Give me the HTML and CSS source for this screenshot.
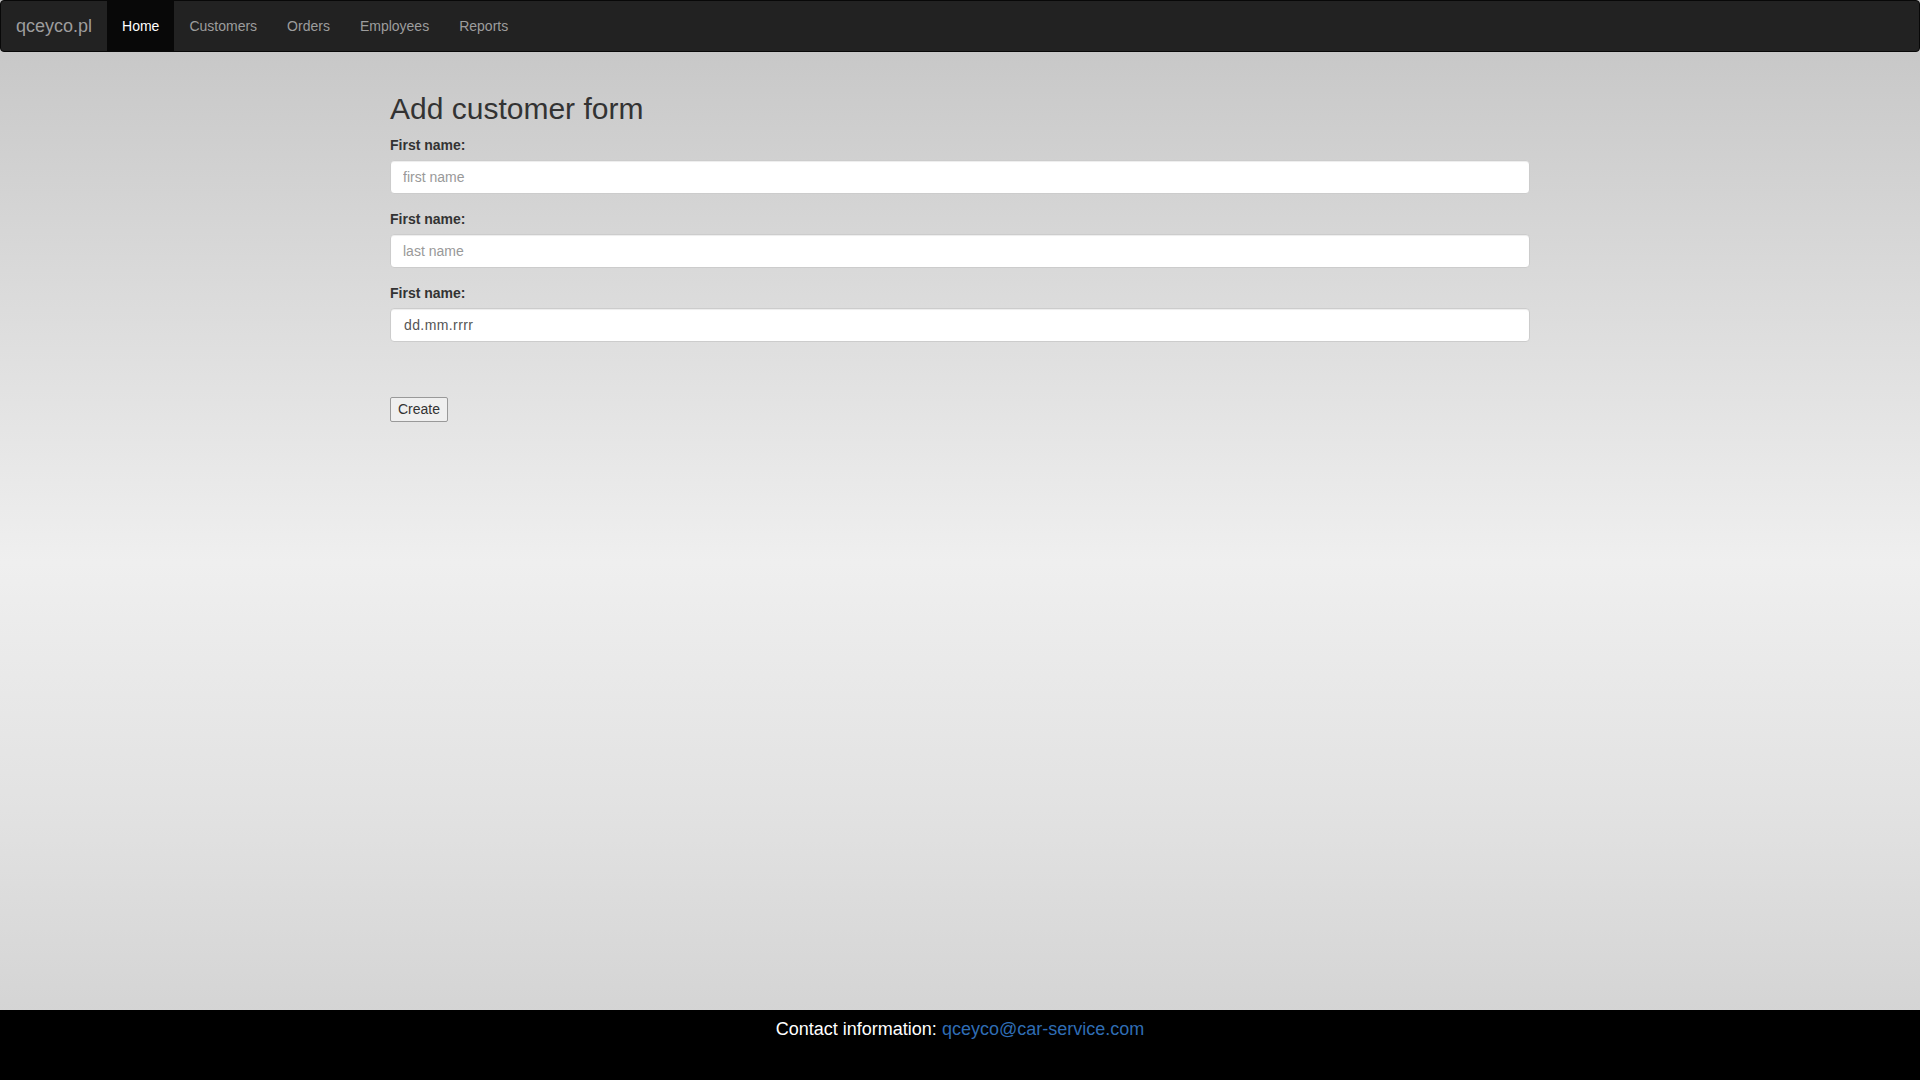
FILE: index.html
```html
<!DOCTYPE html>
<html lang="pl">
<head>
<meta charset="utf-8">
<title>qceyco.pl</title>
<link rel="stylesheet" href="styles.css">
</head>
<body>
<div class="page">
  <nav class="navbar">
    <a class="brand" href="#">qceyco.pl</a>
    <ul class="nav">
      <li class="active"><a href="#">Home</a></li>
      <li><a href="#">Customers</a></li>
      <li><a href="#">Orders</a></li>
      <li><a href="#">Employees</a></li>
      <li><a href="#">Reports</a></li>
    </ul>
  </nav>
  <main class="container">
    <h2 class="title">Add customer form</h2>
    <form class="form">
      <div class="form-group">
        <label class="label">First name:</label>
        <input class="form-control" type="text" placeholder="first name">
      </div>
      <div class="form-group">
        <label class="label">First name:</label>
        <input class="form-control" type="text" placeholder="last name">
      </div>
      <div class="form-group">
        <label class="label">First name:</label>
        <input class="form-control date" type="text" value="dd.mm.rrrr">
      </div>
      <div class="actions">
        <button class="create" type="button">Create</button>
      </div>
    </form>
  </main>
  <footer class="footer">
    Contact information: <a class="mail" href="#">qceyco@car-service.com</a>
  </footer>
</div>
</body>
</html>
```

FILE: styles.css
```css
* { box-sizing: border-box; }
html, body { margin: 0; padding: 0; height: 100%; }
body {
  font-family: "Liberation Sans", Arial, Helvetica, sans-serif;
  font-size: 14px;
  line-height: 1.42857;
  color: #333;
  background: linear-gradient(to bottom, #c4c4c4 0%, #d9d9d9 25%, #efefef 52%, #e2e2e2 75%, #d4d4d4 94%, #d4d4d4 100%);
}
.page {
  display: flex;
  flex-direction: column;
  min-height: 100vh;
}
.navbar {
  display: flex;
  align-items: stretch;
  height: 52px;
  background: #222;
  border: 1px solid #080808;
  border-radius: 4px;
  margin-bottom: 20px;
}
.brand {
  display: block;
  padding: 15px 15px 15px 15px;
  font-size: 18px;
  line-height: 20px;
  color: #9d9d9d;
  text-decoration: none;
}
.nav {
  display: flex;
  list-style: none;
  margin: 0;
  padding: 0;
}
.nav li a {
  display: block;
  padding: 15px 15px;
  line-height: 20px;
  color: #9d9d9d;
  text-decoration: none;
  height: 50px;
}
.nav li.active a {
  background: #080808;
  color: #fff;
}
.container {
  flex: 1;
  width: 1170px;
  margin: 0 auto;
  padding: 0 15px;
}
.title {
  font-size: 30px;
  font-weight: 500;
  line-height: 1.1;
  margin: 20px 0 10px;
  color: #333;
}
.form-group { margin-bottom: 15px; }
.label {
  display: block;
  font-weight: bold;
  padding-top: 1px;
  margin-bottom: 4px;
}
.form-control {
  display: block;
  width: 100%;
  height: 34px;
  padding: 6px 12px;
  font-family: inherit;
  font-size: 14px;
  line-height: 1.42857;
  color: #555;
  background: #fff;
  border: 1px solid #ccc;
  border-radius: 4px;
  box-shadow: inset 0 1px 1px rgba(0,0,0,.075);
  outline: none;
}
.form-control::placeholder { color: #999; }
.date { letter-spacing: 0.4px; padding-left: 13px; }
.actions { padding-top: 40px; }
.create {
  font-family: inherit;
  font-size: 14px;
  line-height: 19px;
  color: #333;
  padding: 2px 7px;
  height: 25px;
  background: #efefef;
  border: 1px solid #999;
  border-radius: 2px;
}
.footer {
  height: 70px;
  background: #000;
  color: #fff;
  text-align: center;
  font-size: 18px;
  line-height: 24px;
  padding-top: 7px;
}
.mail { color: #2f6db5; text-decoration: none; }
```
